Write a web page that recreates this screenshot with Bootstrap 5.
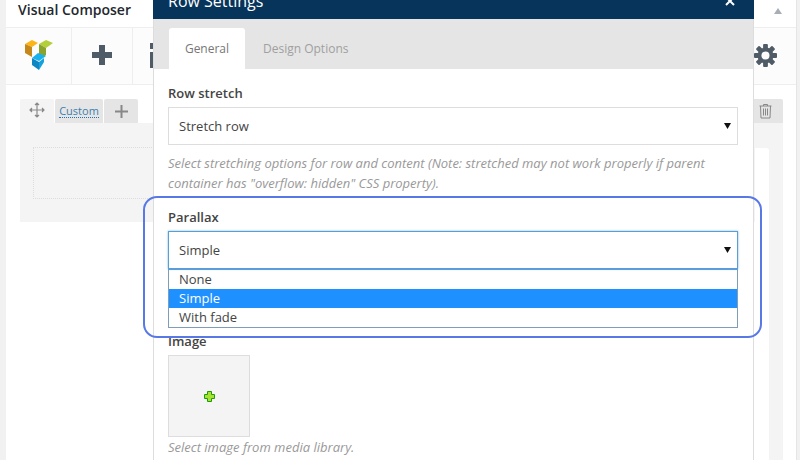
<!DOCTYPE html>
<html lang="en">

<head>
  <meta charset="UTF-8" />
  <title>Visual Composer - Row Settings</title>
  <meta name="viewport" content="width=device-width, initial-scale=1.0" />
  <link href="https://cdn.jsdelivr.net/npm/bootstrap@5.3.0/dist/css/bootstrap.min.css" rel="stylesheet" />
  <style>
    html, body { height: 460px; overflow: hidden; }
    body { background: #f1f1f1; font-family: "Open Sans", sans-serif; color: #444; position: relative; }

    /* page behind the dialog */
    .vc-panel { margin: 0 3px 0 6px; height: 460px; background: #fff; border-right: 1px solid #e5e5e5; overflow: hidden; }
    .vc-head { height: 28px; padding: 0 14px 9px 12px; border-bottom: 1px solid #eee; font-size: 14px; font-weight: 600; color: #23282d; }
    .vc-tools { height: 57px; background: #fcfcfc; border-bottom: 1px solid #eee; }
    .vc-tool { width: 61px; padding-bottom: 2px; border-right: 1px solid #eee; }
    .vc-tool.logo { width: 66px; }
    .vc-tool.clipped { padding-left: 17px; }
    .vc-gear { margin-right: 19px; padding-bottom: 2px; }
    .vc-body { padding: 14px 13px 0 14px; }
    .vc-rowtabs { height: 24px; gap: 1px; }
    .vc-rowtab { height: 24px; background: #e5e5e5; border-radius: 2px 2px 0 0; }
    .vc-rowtab.first { width: 34px; padding: 0 1px 2px 0; background: #f4f4f4; }
    .vc-rowtab.label { width: 48px; font-size: 11px; color: #3b7fb0; }
    .vc-rowtab.label span { border-bottom: 1px dotted #2271b1; line-height: 13px; }
    .vc-rowtab.add { width: 34px; }
    .vc-rowtab.trash { width: 36px; margin-left: auto; }
    .vc-rowbody { height: 99px; background: #f4f4f4; padding: 24px 13px; }
    .vc-column { height: 52px; background: #f4f4f4; border: 1px dotted #ddd; }
    .vc-rowside { width: 28px; height: 337px; padding: 25px 14px 0 0; background: #f4f4f4; }
    .vc-rowside-inner { height: 100%; background: #fff; border-radius: 0 3px 0 0; }

    /* dialog */
    .rs-modal { position: absolute; left: 153px; top: -20px; width: 601px; height: 480px; background: #fff; border-left: 1px solid #ddd; border-right: 1px solid #ddd; }
    .rs-title { height: 39px; margin: 0 -1px; padding: 3px 19px 0 15px; background: #07345b; color: #fff; font-size: 16px; }
    .rs-tabs { height: 50px; padding: 9px 0 0 15px; background: #e5e5e5; }
    .rs-tab { height: 41px; padding: 0 18px; font-size: 12px; color: #a0a0a0; }
    .rs-tab.active { width: 76px; padding: 0; justify-content: center; background: #fff; color: #777; border-radius: 3px 3px 0 0; }
    .rs-body { padding: 15px 15px 0 14px; }
    .rs-label { margin: 0 0 5px 0; font-size: 13px; font-weight: 600; line-height: 18px; color: #444; }
    .rs-select.form-select { height: 38px; padding: 2px 28px 0 10px; font-size: 13px; color: #444; border: 1px solid #ddd; border-radius: 0; box-shadow: none;
      background-image: url("data:image/svg+xml,%3Csvg xmlns='http://www.w3.org/2000/svg' width='7' height='6'%3E%3Cpath d='M0 0h7L3.500 6z' fill='%23111'/%3E%3C/svg%3E");
      background-position: right 6px center; background-size: 7px 6px; }
    .rs-select.is-open.form-select { border-color: #5b9dd9; box-shadow: 0 0 2px rgba(30, 140, 190, .6); }
    .rs-help { margin: 8px 0 0 0; font-size: 13px; line-height: 20px; font-style: italic; color: #999; }
    .rs-group { margin-top: 15px; }
    .rs-options { border: 1px solid #7f9db9; border-top-color: #5b9dd9; font-size: 13px; line-height: 19px; }
    .rs-option { padding: 0 10px; height: 19px; color: #444; }
    .rs-option.selected { background: #1e90ff; color: #fff; }
    .rs-image-group { margin-top: 4px; }
    .rs-image { width: 82px; height: 82px; background: #f4f4f4; border: 1px solid #ddd; }
    .rs-help.tight { margin-top: 0; }

    /* annotation drawn on top of the screenshot */
    .rs-callout { position: absolute; left: 143px; top: 196px; width: 619px; height: 142px; border: 2.500px solid #5878e6; border-radius: 14px; pointer-events: none; }
  </style>
</head>

<body>
  <div class="vc-panel">
    <div class="vc-head d-flex align-items-center justify-content-between">
      <span>Visual Composer</span>
      <svg width="8" height="6" viewBox="0 0 8 6" class="mt-1"><path d="M0 6 4 0l4 6z" fill="#a7aeb6" /></svg>
    </div>

    <div class="vc-tools d-flex">
      <div class="vc-tool logo d-flex align-items-center justify-content-center">
        <!-- logo -->
        <svg width="28" height="30" viewBox="0 0 28 30">
          <path d="M0 4 7 0l6 3-6 4z" fill="#fdb515" />
          <path d="M0 4l7 3v10L0 13z" fill="#c4881a" />
          <path d="M14 4l7-4 7 3-7 5z" fill="#b5cf3a" />
          <path d="M14 4l7 4v7l-7 5z" fill="#8aa32c" />
          <path d="M7 18l6-5 8 3-7 5z" fill="#18b0ee" />
          <path d="M7 18l7 4v8l-7-5z" fill="#0f86c4" />
          <path d="M14 22l5-4v4l-5 8z" fill="#16a0dc" />
        </svg>
      </div>
      <div class="vc-tool d-flex align-items-center justify-content-center">
        <svg width="20" height="20" viewBox="0 0 20 20"><path d="M7 0h6v7h7v6h-7v7H7v-7H0V7h7z" fill="#4f5b66" /></svg>
      </div>
      <div class="vc-tool clipped d-flex align-items-center">
        <svg width="10" height="25" viewBox="0 0 10 25"><path d="M0 0h10v6H0zM0 9h10v16H0z" fill="#4f5b66" /></svg>
      </div>
      <div class="vc-gear ms-auto d-flex align-items-center">
        <!-- gear -->
        <svg width="23" height="23" viewBox="0 0 24 24">
          <g fill="#4f5b66">
            <rect x="9.500" y="0" width="5" height="24" rx="1" />
            <rect x="9.500" y="0" width="5" height="24" rx="1" transform="rotate(45 12 12)" />
            <rect x="9.500" y="0" width="5" height="24" rx="1" transform="rotate(90 12 12)" />
            <rect x="9.500" y="0" width="5" height="24" rx="1" transform="rotate(135 12 12)" />
          </g>
          <circle cx="12" cy="12" r="6.500" fill="none" stroke="#4f5b66" stroke-width="3.600" />
          <circle cx="12" cy="12" r="4.200" fill="#fcfcfc" />
        </svg>
      </div>
    </div>

    <div class="vc-body">
      <div class="vc-rowtabs d-flex">
        <div class="vc-rowtab first d-flex align-items-center justify-content-center">
          <svg width="16" height="16" viewBox="0 0 16 16" fill="none" stroke="#8a8a8a" stroke-width="1.200">
            <path d="M8 1v14M1 8h14" />
            <path d="M6 3l2-2 2 2M6 13l2 2 2-2M3 6 1 8l2 2M13 6l2 2-2 2" fill="#8a8a8a" />
          </svg>
        </div>
        <div class="vc-rowtab label d-flex align-items-center justify-content-center"><span>Custom</span></div>
        <div class="vc-rowtab add d-flex align-items-center justify-content-center">
          <svg width="13" height="13" viewBox="0 0 13 13"><path d="M5.500 0h2v5.500H13v2H7.500V13h-2V7.500H0v-2h5.500z" fill="#888" /></svg>
        </div>
        <div class="vc-rowtab trash d-flex align-items-center justify-content-center">
          <svg width="13" height="16" viewBox="0 0 13 16" fill="none" stroke="#888" stroke-width="1">
            <path d="M.5 3h12M4.500 3V1.500h4V3M1.500 3l.5 12h9l.5-12M4.500 5.500v7M6.500 5.500v7M8.500 5.500v7" />
          </svg>
        </div>
      </div>
      <div class="d-flex align-items-start">
        <div class="vc-rowbody flex-grow-1">
          <div class="vc-column"></div>
        </div>
        <div class="vc-rowside">
          <div class="vc-rowside-inner"></div>
        </div>
      </div>
    </div>
  </div>

  <div class="rs-modal">
    <div class="rs-title d-flex align-items-center justify-content-between">
      <span>Row Settings</span>
      <svg width="10" height="10" viewBox="0 0 10 10" stroke="#fff" stroke-width="2"><path d="M1 1l8 8M9 1l-8 8" /></svg>
    </div>
    <div class="rs-tabs d-flex">
      <div class="rs-tab active d-flex align-items-center">General</div>
      <div class="rs-tab d-flex align-items-center">Design Options</div>
    </div>
    <div class="rs-body">
      <div>
        <label class="rs-label d-block" for="rowStretch">Row stretch</label>
        <select class="form-select rs-select" id="rowStretch">
          <option>Stretch row</option>
        </select>
        <p class="rs-help">Select stretching options for row and content (Note: stretched may not work properly if parent container has "overflow: hidden" CSS property).</p>
      </div>
      <div class="rs-group">
        <label class="rs-label d-block" for="parallax">Parallax</label>
        <select class="form-select rs-select is-open" id="parallax">
          <option>Simple</option>
        </select>
        <div class="rs-options">
          <div class="rs-option">None</div>
          <div class="rs-option selected">Simple</div>
          <div class="rs-option">With fade</div>
        </div>
      </div>
      <div class="rs-image-group">
        <div class="rs-label">Image</div>
        <div class="rs-image d-flex align-items-center justify-content-center">
          <svg width="11" height="11" viewBox="0 0 11 11"><path d="M3.500.5h4v3h3v4h-3v3h-4v-3h-3v-4h3z" fill="#a6e22e" stroke="#1f9a0a" /></svg>
        </div>
        <p class="rs-help tight">Select image from media library.</p>
      </div>
    </div>
  </div>

  <div class="rs-callout"></div>

  <script src="https://cdn.jsdelivr.net/npm/bootstrap@5.3.0/dist/js/bootstrap.bundle.min.js"></script>
</body>

</html>
